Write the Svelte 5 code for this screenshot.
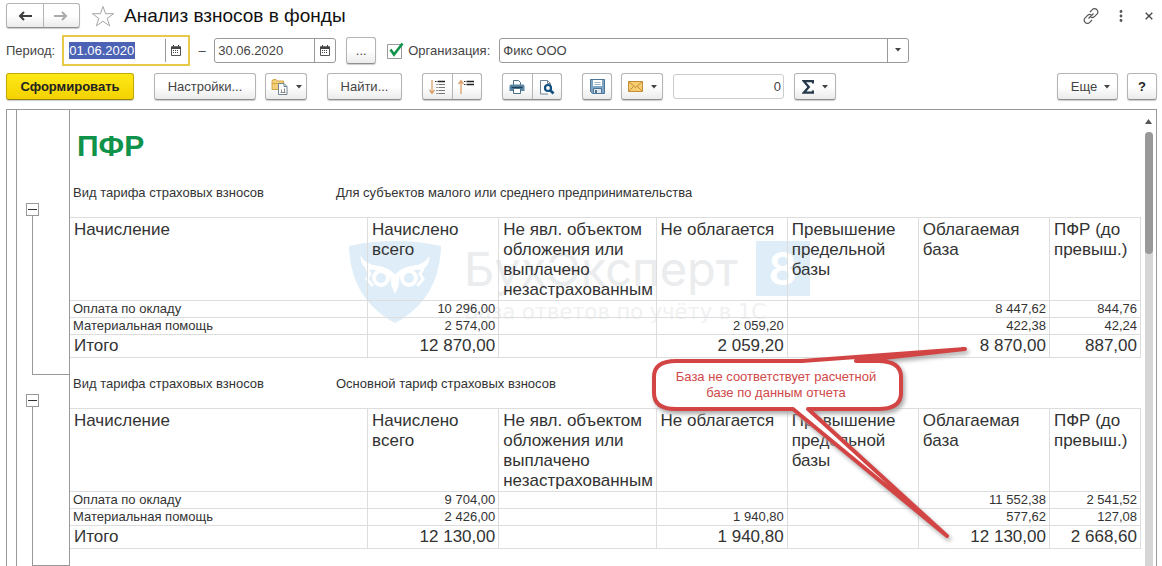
<script lang="ts">
  type Row = { name: string; values: string[] };
  type Section = { tariff: string; rows: Row[]; total: Row };

  const columns = [
    "Начисление",
    "Начислено всего",
    "Не явл. объектом обложения или выплачено незастрахованным",
    "Не облагается",
    "Превышение предельной базы",
    "Облагаемая база",
    "ПФР (до превыш.)",
  ];

  const sections: Section[] = [
    {
      tariff: "Для субъектов малого или среднего предпринимательства",
      rows: [
        { name: "Оплата по окладу", values: ["10 296,00", "", "", "", "8 447,62", "844,76"] },
        { name: "Материальная помощь", values: ["2 574,00", "", "2 059,20", "", "422,38", "42,24"] },
      ],
      total: { name: "Итого", values: ["12 870,00", "", "2 059,20", "", "8 870,00", "887,00"] },
    },
    {
      tariff: "Основной тариф страховых взносов",
      rows: [
        { name: "Оплата по окладу", values: ["9 704,00", "", "", "", "11 552,38", "2 541,52"] },
        { name: "Материальная помощь", values: ["2 426,00", "", "1 940,80", "", "577,62", "127,08"] },
      ],
      total: { name: "Итого", values: ["12 130,00", "", "1 940,80", "", "12 130,00", "2 668,60"] },
    },
  ];

  let dateFrom = $state("01.06.2020");
  let dateTo = $state("30.06.2020");
  let useOrg = $state(true);
  let org = $state("Фикс ООО");
  let sum = $state("0");
  let collapsed = $state([false, false]);
</script>

{#snippet caret()}
  <svg class="caret" width="6" height="4" viewBox="0 0 6 4" aria-hidden="true"><path d="M0 0h6L3 3.5z" fill="#444" /></svg>
{/snippet}

{#snippet calendar()}
  <svg width="10" height="11" viewBox="0 0 10 11" aria-hidden="true">
    <path d="M.5 2h9v8.500h-9z" fill="#fff" stroke="#555" />
    <path d="M0 1.500h10V4H0z" fill="#444" />
    <path d="M2.500 0v2M7.500 0v2" stroke="#444" />
    <path d="M2 5.500h6M2 7.500h6" stroke="#444" stroke-dasharray="1 1" />
  </svg>
{/snippet}

<div class="window">
  <header class="titlebar">
    <div class="group nav">
      <button aria-label="Назад">
        <svg width="14" height="10" viewBox="0 0 14 10"><path d="M14 5H2M6 1L2 5l4 4" fill="none" stroke="#3c3c3c" stroke-width="2" /></svg>
      </button>
      <button aria-label="Вперед">
        <svg width="14" height="10" viewBox="0 0 14 10"><path d="M0 5h12M8 1l4 4-4 4" fill="none" stroke="#aaa" stroke-width="2" /></svg>
      </button>
    </div>
    <button class="plain" aria-label="Добавить в избранное">
      <svg width="24" height="22" viewBox="0 0 24 22"><path d="M12 1.500l2.600 7.200h8l-6.400 4.700 2.400 7.400-6.600-4.500-6.600 4.500 2.400-7.400L1.400 8.700h8z" fill="#fff" stroke="#a5a5a5" /></svg>
    </button>
    <h1>Анализ взносов в фонды</h1>
    <div class="window-actions">
      <button class="plain" aria-label="Получить ссылку">
        <svg width="16" height="16" viewBox="0 0 16 16"><g fill="none" stroke="#555" stroke-width="1.200"><path d="M7 4l2.300-2.300a3 3 0 0 1 4.600 0 3 3 0 0 1 0 4.400L11.200 8.800a3 3 0 0 1-3.400.4" /><path d="M9 12l-2.300 2.300a3 3 0 0 1-4.600 0 3 3 0 0 1 0-4.400L4.800 7.200a3 3 0 0 1 3.400-.4" /><path d="M5.500 10.500l5-5" /></g></svg>
      </button>
      <button class="plain" aria-label="Меню">
        <svg width="4" height="12" viewBox="0 0 4 12"><g fill="#555"><circle cx="2" cy="1.500" r="1.400" /><circle cx="2" cy="6" r="1.400" /><circle cx="2" cy="10.500" r="1.400" /></g></svg>
      </button>
      <button class="plain" aria-label="Закрыть">
        <svg width="8" height="8" viewBox="0 0 8 8"><path d="M.7.7l6.600 6.600M7.300.7L.7 7.300" stroke="#444" stroke-width="1.300" /></svg>
      </button>
    </div>
  </header>

  <div class="filters">
    <label for="from">Период:</label>
    <div class="field date focused">
      <input id="from" bind:value={dateFrom} />
      <button aria-label="Выбрать начало периода">{@render calendar()}</button>
    </div>
    <span class="dash">–</span>
    <div class="field date">
      <input aria-label="Конец периода" bind:value={dateTo} />
      <button aria-label="Выбрать конец периода">{@render calendar()}</button>
    </div>
    <button class="btn period">...</button>
    <label class="check">
      <input type="checkbox" bind:checked={useOrg} />
      <svg width="17" height="17" viewBox="0 0 17 17" aria-hidden="true">
        <path d="M.5 2.500h14v14H.5z" fill="#fff" stroke="#999" />
        {#if useOrg}<path d="M3.500 7.500l3.500 5L15.500 1.500" fill="none" stroke="#10934a" stroke-width="2.600" />{/if}
      </svg>
      Организация:
    </label>
    <div class="field org">
      <input aria-label="Организация" bind:value={org} />
      <button aria-label="Выбрать организацию">{@render caret()}</button>
    </div>
  </div>

  <div class="toolbar">
    <button class="btn primary">Сформировать</button>
    <button class="btn settings">Настройки...</button>
    <button class="btn drop" aria-label="Варианты отчета">
      <svg width="17" height="17" viewBox="0 0 17 17">
        <path d="M1 3.500Q1 1.500 3 1.500h2L6.500 3h6v8.500H1z" fill="#f5cf78" stroke="#d3a548" />
        <path d="M1 5.500h11" stroke="#d3a548" />
        <path d="M7.500 5.500h5.500l3 3v8H7.500z" fill="#fff" stroke="#6f8494" />
        <path d="M13 5.500v3h3" fill="none" stroke="#6f8494" />
        <path d="M10.500 14.500v-3M13.500 14.500v-4M9.500 14.500h5" stroke="#888" />
      </svg>
      {@render caret()}
    </button>
    <button class="btn find">Найти...</button>
    <div class="group pair">
      <button aria-label="Свернуть группы">
        <svg width="17" height="16" viewBox="0 0 17 16"><path d="M3 1v13M.5 11L3 14.500l2.500-3.500" fill="none" stroke="#dba068" stroke-width="1.300" /><path d="M8.500 2.500H16" stroke="#222" stroke-width="1.500" /><path d="M9.500 5.500H16M9.500 8.500H16M9.500 11.500H16M9.500 14.500H16" stroke="#777" /><path d="M6 2.500h1.500M7.500 5.500h1M7.500 8.500h1M7.500 11.500h1M7.500 14.500h1" stroke="#333" /></svg>
      </button>
      <button aria-label="Развернуть группы">
        <svg width="17" height="16" viewBox="0 0 17 16"><path d="M3 15V2M.5 5L3 1.500 5.500 5" fill="none" stroke="#dba068" stroke-width="1.300" /><path d="M8.500 2.500H16M8.500 5.500H16" stroke="#222" stroke-width="1.500" /><path d="M6 2.500h1.500M6 5.500h1.500" stroke="#333" /></svg>
      </button>
    </div>
    <div class="group pair">
      <button aria-label="Печать">
        <svg width="16" height="16" viewBox="0 0 16 16"><path d="M4.500 6V1.500h5l2 2V6" fill="#fff" stroke="#4f6f86" /><path d="M2 5.500h12q1.500 0 1.500 1.500v5H.5V7Q.5 5.500 2 5.500z" fill="#5d87a6" /><path d="M2.500 8.500h11" stroke="#1d405c" stroke-width="1.500" /><path d="M4.500 9.500h7v5h-7z" fill="#fff" stroke="#4f6f86" /></svg>
      </button>
      <button aria-label="Предварительный просмотр">
        <svg width="16" height="16" viewBox="0 0 16 16"><path d="M9 15H1.500V1.500h7l3 3V6" fill="#fff" stroke="#6d8496" /><path d="M8.500 1.500v3h3" fill="none" stroke="#6d8496" /><circle cx="9" cy="9" r="3" fill="#fff" stroke="#0f4f80" stroke-width="2.200" /><path d="M11 11l3.500 3.500" stroke="#0f4f80" stroke-width="2.600" /></svg>
      </button>
    </div>
    <button class="btn save" aria-label="Сохранить">
      <svg width="15" height="15" viewBox="0 0 15 15"><path d="M.5.500h14v14h-12l-2-2z" fill="#7fa5c6" stroke="#4c7596" /><path d="M3 1h9v6H3z" fill="#fff" /><path d="M4.500 3.500h6M4.500 5.500h6" stroke="#9db4c6" /><path d="M3.500 9.500h8v5h-8z" fill="#e0e8ee" stroke="#4c7596" /><path d="M5 11h2v3H5z" fill="#4c7596" /></svg>
    </button>
    <button class="btn drop" aria-label="Отправить">
      <svg width="15" height="11" viewBox="0 0 15 11"><path d="M.5.500h14v10H.5z" fill="#f7cd70" stroke="#c38d38" /><path d="M1 1l6.500 5.500L14 1M1 10l4.500-4.500M14 10L9.500 5.500" fill="none" stroke="#c38d38" /></svg>
      {@render caret()}
    </button>
    <input class="sum" aria-label="Сумма" bind:value={sum} />
    <button class="btn drop" aria-label="Показатели">
      <svg width="12" height="14" viewBox="0 0 12 14"><path d="M11 3.500V1.200H1.800L6.800 7l-5 5.700H11v-2.300" fill="none" stroke="#26394a" stroke-width="2.300" /></svg>
      {@render caret()}
    </button>
    <button class="btn more">Еще {@render caret()}</button>
    <button class="btn help">?</button>
  </div>

  <main class="report">
    <div class="rail"></div>
    <div class="sheet">
      <div class="heading"><h2>ПФР</h2></div>
      {#each sections as section, i}
        <section>
          <div class="outline">
            <button aria-label="Свернуть группу" onclick={() => (collapsed[i] = !collapsed[i])}>
              <svg width="9" height="9" viewBox="0 0 9 9"><path d="M0 4.500h9" stroke="#333" />{#if collapsed[i]}<path d="M4.500 0v9" stroke="#333" />{/if}</svg>
            </button>
            <div class="bracket"></div>
          </div>
          <div class="content">
            <p class="tariff"><span>Вид тарифа страховых взносов</span><span>{section.tariff}</span></p>
            {#if !collapsed[i]}
              <table>
                <colgroup>
                  <col class="c-name" /><col class="c-num" /><col class="c-wide" /><col class="c-num" />
                  <col class="c-num" /><col class="c-num" /><col />
                </colgroup>
                <thead>
                  <tr>{#each columns as column}<th>{column}</th>{/each}</tr>
                </thead>
                <tbody>
                  {#each section.rows as row}
                    <tr><td>{row.name}</td>{#each row.values as value}<td>{value}</td>{/each}</tr>
                  {/each}
                </tbody>
                <tfoot>
                  <tr><td>{section.total.name}</td>{#each section.total.values as value}<td>{value}</td>{/each}</tr>
                </tfoot>
              </table>
            {/if}
          </div>
        </section>
      {/each}

      <div class="watermark">
        <svg width="92" height="82" viewBox="0 0 92 82" aria-hidden="true">
          <path d="M0 5Q46-5 92 5C91 40 76 66 46 82 16 66 1 40 0 5z" fill="#deedf7" />
          <g fill="none" stroke="#fff" stroke-linecap="round">
            <path d="M12 16q5 8 15 9 12 1 19 9 7-8 19-9 10-1 15-9 0 9-7 12-12 0-20 6l-7 3-7-3q-8-6-20-6-7-3-7-12z" fill="#fff" />
            <circle cx="32" cy="37" r="7" fill="#deedf7" stroke-width="4" />
            <circle cx="60" cy="37" r="7" fill="#deedf7" stroke-width="4" />
            <path d="M18 28l3 5-3 5 5 6M74 28l-3 5 3 5-5 6" stroke-width="3" />
            <path d="M42 36h8l-1 9-3 7-3-7z" fill="#fff" />
          </g>
        </svg>
        <div class="brand">
          <div class="brand-name">БухЭксперт <span>8</span></div>
          <div class="brand-sub">База ответов по учёту в 1С</div>
        </div>
      </div>

      <div class="callout">
        <svg width="330" height="206" viewBox="0 0 330 206" aria-hidden="true">
          <path d="M24 20H150L313 8 204 20H226Q249 20 249 36V52Q249 68 226 68H156L295 195 141 68H24Q2 68 2 52V36Q2 20 24 20z" fill="#fff" stroke="#d34545" stroke-width="4" stroke-linejoin="round" />
        </svg>
        <p>База не соответствует расчетной базе по данным отчета</p>
      </div>
    </div>
    <div class="scrollbar">
      <svg width="7" height="5" viewBox="0 0 7 5" aria-hidden="true"><path d="M3.500 0L7 5H0z" fill="#555" /></svg>
      <div class="track"><div class="thumb"></div></div>
    </div>
  </main>
</div>

<style>
  :global(body) { background: #fff; overflow: hidden; }
  .window { height: 100vh; display: flex; flex-direction: column; overflow: hidden; font-family: "Liberation Sans", Arial, sans-serif; font-size: 13px; color: #444; }
  button, input { font: inherit; color: inherit; }
  button { display: flex; align-items: center; justify-content: center; padding: 0; cursor: pointer; box-sizing: border-box; }
  h1, h2, p { margin: 0; }
  svg { flex: none; display: block; }

  .plain { background: none; border: 0; }
  .btn, .group { height: 27px; box-sizing: border-box; border: 1px solid #b4b4b4; border-bottom-color: #8e8e8e; border-radius: 3px; background: linear-gradient(#fff 50%, #ebebeb); box-shadow: 0 1px 1px #ccc; }
  .group { display: flex; }
  .group button { flex: 1; background: none; border: 0; }
  .group button + button { border-left: 1px solid #b4b4b4; }

  .titlebar { display: flex; align-items: center; height: 31px; padding: 0 9px 0 6px; }
  .nav { width: 74px; height: 25px; margin-right: 11px; }
  h1 { margin-left: 9px; font-size: 19px; line-height: 24px; font-weight: 400; color: #111; }
  .window-actions { margin-left: auto; display: flex; align-items: center; gap: 22px; }
  .window-actions .plain:first-child { margin-right: -2px; }

  .filters { display: flex; align-items: center; height: 38px; padding-left: 6px; }
  .field { display: flex; height: 25px; box-sizing: border-box; border: 1px solid #999; border-radius: 3px; background: #fff; }
  .field input { flex: 1; min-width: 0; border: 0; outline: 0; padding: 0 3px; background: none; }
  .field button { width: 21px; border: 0; border-left: 1px solid #999; background: none; }
  .date { width: 122px; }
  .focused { width: 128px; height: 31px; margin-left: 7px; border: 2px solid #e8c94a; border-radius: 0; padding: 2px 1px; }
  .focused input { flex: none; width: 66px; height: 17px; margin: 3px 30px 0 4px; padding: 0; background: #4b62b5; color: #fff; }
  .dash { width: 24px; text-align: center; }
  .period { width: 30px; margin-left: 10px; }
  .check { display: flex; align-items: center; gap: 4px; margin-left: 11px; cursor: pointer; }
  .check input { position: absolute; opacity: 0; margin: 0; }
  .org { width: 410px; margin-left: 9px; }

  .toolbar { display: flex; align-items: center; height: 27px; margin: 4px 5px 9px 6px; }
  .primary { width: 128px; margin-right: 20px; font-weight: 700; color: #222; background: linear-gradient(#ffe817, #f3d200); border-color: #c5a900; border-bottom-color: #97820a; }
  .settings { width: 102px; margin-right: 9px; }
  .drop { width: 42px; gap: 8px; }
  .find { width: 75px; margin-left: 20px; }
  .pair { width: 60px; margin-left: 20px; }
  .save { width: 30px; margin: 0 9px 0 20px; }
  .sum { width: 111px; height: 25px; box-sizing: border-box; margin: 0 10px; padding: 0 2px; border: 1px solid #ccc; border-radius: 3px; text-align: right; }
  .more { width: 61px; margin-left: auto; gap: 7px; padding-left: 6px; }
  .help { width: 30px; margin-left: 9px; font-weight: 700; color: #222; }

  .report { flex: 1; min-height: 0; display: flex; margin: 0 5px 0 6px; border: 1px solid #999; border-bottom: 0; }
  .rail { width: 9px; border-right: 1px solid #999; }
  .sheet { flex: 1; position: relative; }
  .heading { height: 74px; box-sizing: border-box; margin-left: 52px; padding: 17px 0 0 7px; border-left: 1px solid #999; }
  h2 { font-size: 30px; line-height: 38px; color: #0f9249; }
  section { display: grid; grid-template-columns: 52px 1fr; }
  .outline { display: flex; flex-direction: column; padding: 19px 0 0 9px; }
  .outline button { width: 13px; height: 13px; border: 1px solid #999; background: #fff; }
  .bracket { flex: 1; margin-left: 6px; border: 1px solid #999; border-width: 0 0 1px 1px; }
  .content { border-left: 1px solid #999; padding-bottom: 17px; }
  .tariff { display: grid; grid-template-columns: 263px 1fr; height: 33px; padding-left: 3px; line-height: 18px; color: #333; }

  table { position: relative; z-index: 1; width: 100%; table-layout: fixed; border-collapse: collapse; color: #333; }
  .c-name { width: 27.800%; }
  .c-num { width: 12.250%; }
  .c-wide { width: 14.700%; }
  th, td { border: 1px solid #ddd; padding: 0 4px; line-height: 16px; text-align: left; vertical-align: top; font-weight: 400; }
  th:first-child, td:first-child { border-left: 0; }
  td { padding: 0 3px; }
  td + td { text-align: right; }
  th { height: 80px; padding-top: 2px; font-size: 17px; line-height: 20px; }
  tfoot td { padding: 0 4px; font-size: 17px; line-height: 22px; }
  tfoot td + td { padding-right: 3px; }

  .watermark { position: absolute; left: 332px; top: 131px; display: flex; gap: 23px; color: #eaecee; }
  .brand-name { display: flex; align-items: center; height: 55px; font: 47px/55px Inter, sans-serif; }
  .brand-name span { width: 54px; margin-left: 18px; background: #deedf7; color: #fff; font-size: 45px; text-align: center; font-weight: 600; }
  .brand-sub { margin-top: 5px; font: 21px/22px "DejaVu Sans", sans-serif; color: #f0f1f2; }

  .callout { position: absolute; z-index: 2; left: 635px; top: 231px; width: 330px; }
  .callout svg { filter: drop-shadow(2px 3px 2px #aaa); }
  .callout p { position: absolute; left: 14px; top: 28px; width: 220px; line-height: 16px; text-align: center; color: #d04848; }

  .scrollbar { width: 15px; display: flex; flex-direction: column; align-items: center; gap: 8px; padding-top: 9px; }
  .track { flex: 1; width: 8px; border-radius: 4px 4px 0 0; background: #d6d6d6; }
  .thumb { height: 122px; border-radius: 4px; background: #999; }
</style>
